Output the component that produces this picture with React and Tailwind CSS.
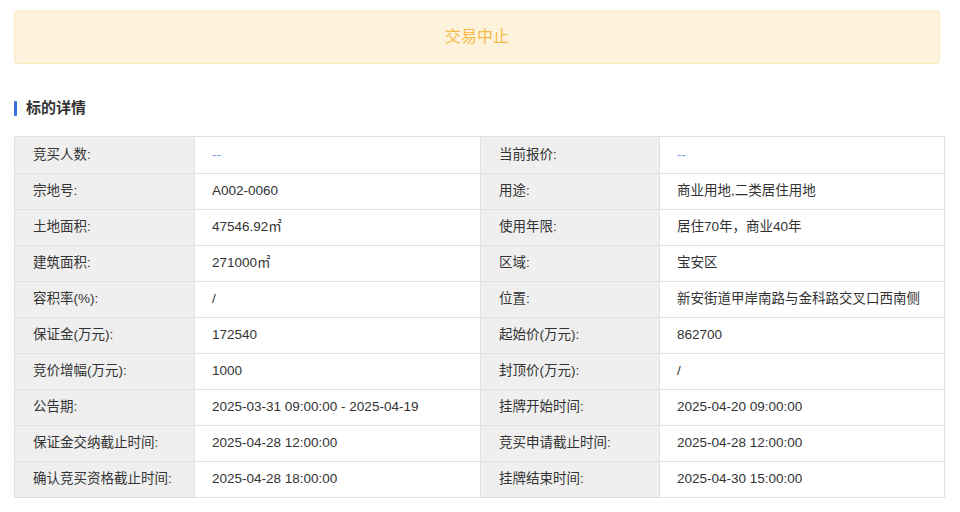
const rows=[["竞买人数:","--","当前报价:","--"],["宗地号:","A002-0060","用途:","商业用地,二类居住用地"],["土地面积:","47546.92㎡","使用年限:","居住70年，商业40年"],["建筑面积:","271000㎡","区域:","宝安区"],["容积率(%):","/","位置:","新安街道甲岸南路与金科路交叉口西南侧"],["保证金(万元):","172540","起始价(万元):","862700"],["竞价增幅(万元):","1000","封顶价(万元):","/"],["公告期:","2025-03-31 09:00:00 - 2025-04-19","挂牌开始时间:","2025-04-20 09:00:00"],["保证金交纳截止时间:","2025-04-28 12:00:00","竞买申请截止时间:","2025-04-28 12:00:00"],["确认竞买资格截止时间:","2025-04-28 18:00:00","挂牌结束时间:","2025-04-30 15:00:00"]];
const V=({v})=>v==="--"?<span className="text-[#7a9be6]">--</span>:v;
export default function App(){return(
<div className="w-[960px] h-[512px] bg-white pt-[10px] text-[13.5px] text-[#333]" style={{fontFamily:'"Liberation Sans","Noto Sans CJK SC",sans-serif'}}>
<div className="mx-[14px] w-[926px] h-[54px] rounded-[4px] bg-[#fdf3dc] border border-[#fbe8bd] flex items-center justify-center text-[16px] text-[#f6bb47]">交易中止</div>
<div className="mt-[36px] ml-[14px] flex items-center h-[16px]"><div className="w-[3px] h-[15px] bg-[#3a6fe0] rounded-[1px]"></div><span className="ml-[9px] text-[15px] font-bold text-[#333]">标的详情</span></div>
<div className="mt-[20px] ml-[14px] w-[931px] border border-[#e0e0e0]">
{rows.map((r,i)=>(<div key={i} className={"grid grid-cols-[180px_286px_179px_284px] h-[36px] "+(i?"border-t border-[#e0e0e0]":"")}>
<div className="bg-[#efefef] pl-[18px] flex items-center border-r border-[#e0e0e0]">{r[0]}</div>
<div className="pl-[17px] flex items-center border-r border-[#e0e0e0] whitespace-nowrap"><V v={r[1]}/></div>
<div className="bg-[#efefef] pl-[18px] flex items-center border-r border-[#e0e0e0]">{r[2]}</div>
<div className="pl-[17px] flex items-center whitespace-nowrap"><V v={r[3]}/></div>
</div>))}
</div></div>)}
